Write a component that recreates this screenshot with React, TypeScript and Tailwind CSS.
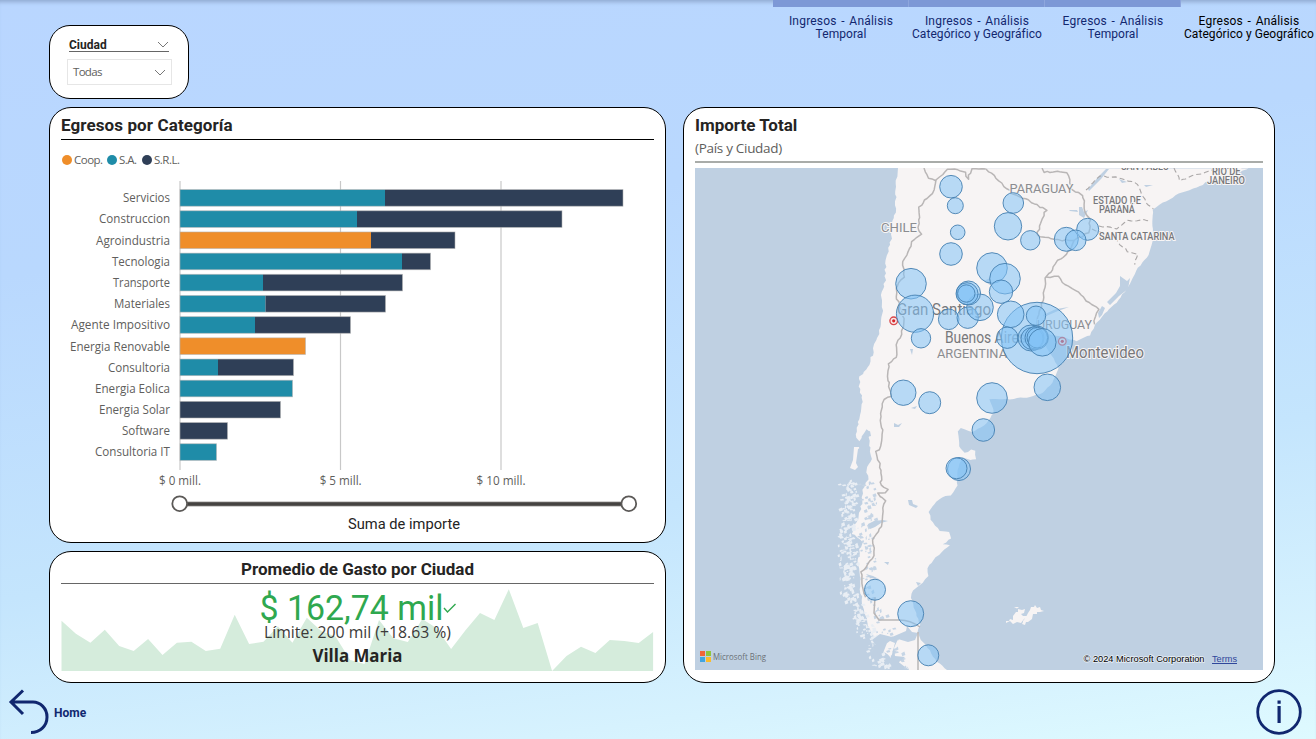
import React from "react";

type Pt = [number, number];

const TEAL = "#1f8ca8";
const NAVY = "#2f3f57";
const ORANGE = "#ef8e2a";

const tabs = [
  { first: "Ingresos - Análisis", second: "Temporal", active: false },
  { first: "Ingresos - Análisis", second: "Categórico y Geográfico", active: false },
  { first: "Egresos - Análisis", second: "Temporal", active: false },
  { first: "Egresos - Análisis", second: "Categórico y Geográfico", active: true },
];

const bars: { name: string; width: number; parts: [number, string][] }[] = [
  { name: "Servicios", width: 47, parts: [[385, TEAL], [623, NAVY]] },
  { name: "Construccion", width: 71, parts: [[357, TEAL], [562, NAVY]] },
  { name: "Agroindustria", width: 74, parts: [[371, ORANGE], [455, NAVY]] },
  { name: "Tecnologia", width: 58, parts: [[402, TEAL], [430.5, NAVY]] },
  { name: "Transporte", width: 57, parts: [[263, TEAL], [402.5, NAVY]] },
  { name: "Materiales", width: 56, parts: [[265.5, TEAL], [385.5, NAVY]] },
  { name: "Agente Impositivo", width: 99, parts: [[255, TEAL], [350.5, NAVY]] },
  { name: "Energia Renovable", width: 100, parts: [[305.5, ORANGE]] },
  { name: "Consultoria", width: 62, parts: [[218, TEAL], [293.5, NAVY]] },
  { name: "Energia Eolica", width: 75, parts: [[292.5, TEAL]] },
  { name: "Energia Solar", width: 71, parts: [[280.5, NAVY]] },
  { name: "Software", width: 48, parts: [[227.5, NAVY]] },
  { name: "Consultoria IT", width: 75, parts: [[216.5, TEAL]] },
];

const trend = [
  227, 266, 293, 254, 303, 318, 282, 330, 293, 290, 318, 311, 209, 297, 290, 244, 293, 218, 258, 275, 345, 357, 225, 280,
  291, 222, 250, 312, 256, 204, 225, 133, 249, 234, 378, 333, 305, 324, 285, 288, 294, 261,
];

const bubbles: [number, number, number][] = [
  [951, 186.7, 11.3], [955.3, 205.7, 8], [957.7, 232.3, 7.3], [951, 254, 11.3], [911, 283.7, 15.3], [915, 313.7, 18.6],
  [921, 338.3, 9.7], [948.7, 319.3, 10.3], [967.7, 317.7, 10.7], [903.3, 392.7, 12.7], [929.7, 402.7, 11],
  [980, 307.3, 13.3], [968.5, 293, 12], [967, 293.7, 11], [966.3, 293.5, 8.7], [1013.3, 203, 10.3],
  [1008, 226.3, 13.7], [1030.3, 240.3, 9.7], [1087.7, 229.3, 11], [1066.3, 239.3, 12], [1075.7, 240.3, 10.3],
  [992, 268, 15.3], [1005, 278.7, 15.3], [1001, 291.7, 11.7], [1037, 338, 35.7], [1010.7, 314.3, 13.3],
  [1036, 315.7, 9.7], [1007.3, 337.7, 10.7], [1031, 338, 13], [1032, 338.5, 11], [1036.7, 337.7, 11.7],
  [1037.3, 337.7, 10.3], [1042.3, 342.3, 13.8], [1047.3, 387.3, 13.3], [992, 398, 15.3], [983.3, 430, 11.3],
  [959, 469, 11.5], [956.5, 468.3, 10.5], [875, 589.7, 10.5], [910.7, 613.7, 13], [928.3, 655.3, 10.5],
];

const hash = (n: number) => {
  const v = Math.sin(n * 127.1 + 11.7) * 43758.5453;
  return v - Math.floor(v);
};

// Splits a polyline into short steps and shakes them to give a natural outline.
const rough = (pts: Pt[], amp: number) => {
  let d = `M${pts[0][0]} ${pts[0][1]}`;
  for (let i = 1; i < pts.length; i++) {
    const [ax, ay] = pts[i - 1];
    const [bx, by] = pts[i];
    const n = Math.max(1, Math.round(Math.hypot(bx - ax, by - ay) / 3.5));
    for (let k = 1; k <= n; k++) {
      const t = k / n;
      const s = i * 31 + k;
      d += `L${(ax + (bx - ax) * t + (hash(s) - 0.5) * amp).toFixed(1)} ${(ay + (by - ay) * t + (hash(s + 500) - 0.5) * amp).toFixed(1)}`;
    }
  }
  return d;
};

const west: Pt[] = [
  [898, 168], [896, 184], [896, 205], [893, 222], [890, 245], [886, 260], [885, 280], [882, 292], [882, 310], [881, 328],
  [876, 340], [872, 355], [867, 370], [860, 376], [859, 386], [862, 398], [861, 408], [858, 425], [856, 438], [859, 442],
  [866, 430], [870, 433], [869, 445], [872, 458], [866, 468], [868, 480], [862, 494], [861, 510], [856, 522], [852, 533],
  [862, 543], [858, 556], [859, 575], [860, 590], [864, 610], [868, 625], [875, 640], [884, 652], [897, 662], [914, 672],
];
const east: Pt[] = [
  [947, 670], [937, 662], [928, 648], [921, 640], [918, 632], [920, 625], [915, 610], [911, 598], [913, 590], [923, 583],
  [928, 576], [928, 568], [933, 560], [942, 552], [950, 545], [943, 544], [951, 538], [949, 532], [940, 531], [931, 520],
  [929, 512], [934, 504], [942, 497], [951, 495], [957, 486], [957, 474], [962, 457], [970, 460], [976, 459], [975, 451],
  [971, 450], [965, 453], [959, 446], [958, 432], [961, 428], [972, 432], [984, 426], [994, 413], [992, 406], [989, 399],
  [1010, 399], [1030, 397], [1043, 393], [1052, 383], [1058, 369], [1054, 358], [1047, 348], [1038, 336], [1037, 328],
  [1046, 333], [1062, 337], [1077, 341], [1090, 335], [1097, 322], [1107, 311], [1119, 300], [1130, 284], [1136, 271],
  [1149, 255], [1153, 239], [1152, 222], [1153, 209], [1166, 201], [1182, 192], [1197, 188], [1208, 181], [1222, 180], [1240, 172],
  [1249, 168],
];

const specks = (count: number, seed: number, kind: "land" | "water") => {
  let d = "";
  for (let i = 0; i < count; i++) {
    const y = 480 + hash(seed + i) * 188;
    const base = y < 590 ? 851 : 851 + (y - 590) * 0.45;
    const spread = kind === "land" ? -15 : 5;
    const x = base + spread + (hash(seed + i + 300) + hash(seed + i + 700)) * 11;
    const w = 0.8 + hash(seed + i + 900) * 2.8;
    const h = 0.8 + hash(seed + i + 1200) * 2.8;
    d += `M${x.toFixed(1)} ${y.toFixed(1)}l${w.toFixed(1)} ${(-h / 2).toFixed(1)}l${(w / 3).toFixed(1)} ${h.toFixed(1)}l${(-w).toFixed(1)} ${(h / 3).toFixed(1)}z`;
  }
  return d;
};

const borders: Pt[][] = [
  [[924, 168], [928, 179], [936, 180], [942, 174], [948, 170], [957, 170], [965, 172], [968, 179], [972, 169], [986, 169]],
  [[936, 180], [933, 194], [925, 200], [919, 207], [920, 217], [918, 228], [921, 234], [914, 239], [908, 252], [903, 262],
    [904, 277], [897, 285], [896, 296], [902, 311], [904, 323], [901, 334], [896, 344], [897, 357], [889, 364], [888, 380],
    [891, 396], [884, 400], [880, 414], [882, 430], [880, 449], [876, 451], [881, 470], [881, 486], [888, 489], [886, 493],
    [878, 494], [885, 500], [882, 515], [881, 526], [873, 540], [874, 555], [866, 568], [861, 571], [863, 590], [865, 597]],
  [[986, 169], [999, 181], [1013, 194], [1032, 202], [1046, 210], [1041, 223], [1037, 235], [1055, 240], [1073, 240], [1071, 250], [1058, 261], [1046, 277], [1043, 300], [1036, 325]],
  [[1042, 168], [1044, 172], [1067, 172], [1072, 190], [1083, 195], [1085, 212], [1090, 219], [1089, 233], [1073, 240]],
  [[1046, 277], [1058, 277], [1068, 287], [1079, 292], [1089, 303], [1099, 310], [1095, 316], [1094, 324]],
];
const stateLines: Pt[][] = [
  [[1086, 190], [1100, 176], [1119, 178], [1138, 184], [1142, 194], [1146, 203], [1154, 209]],
  [[1099, 226], [1117, 229], [1127, 221], [1151, 220]],
  [[1092, 229], [1115, 239], [1128, 252], [1138, 254], [1135, 264]],
  [[1174, 168], [1180, 181], [1195, 175], [1215, 170], [1233, 168]],
];

function Fit(props: {
  x: number; y: number; w: number; children: string; anchor?: "start" | "middle" | "end"; className?: string;
}) {
  return (
    <text
      x={props.x}
      y={props.y}
      textLength={props.w}
      lengthAdjust="spacingAndGlyphs"
      textAnchor={props.anchor ?? "start"}
      className={props.className}
    >
      {props.children}
    </text>
  );
}

function Chevron() {
  return (
    <svg width="12" height="7" viewBox="0 0 12 7" className="shrink-0">
      <path d="M1 1l5 5 5-5" fill="none" stroke="#777" strokeWidth="1" />
    </svg>
  );
}

function Legend() {
  const items = [
    { label: "Coop.", dot: "bg-[#ef8e2a]", box: "w-[45px]" },
    { label: "S.A.", dot: "bg-[#1f8ca8]", box: "w-[35px]" },
    { label: "S.R.L.", dot: "bg-[#2f3f57]", box: "w-[45px]" },
  ];
  return (
    <div className="mt-[12px] flex h-4 items-center pl-px font-['Open_Sans',sans-serif] text-[11.5px] tracking-[-0.5px] text-[#605e5c]">
      {items.map((it) => (
        <div key={it.label} className={`flex items-center gap-[2px] ${it.box}`}>
          <span className={`size-[10px] shrink-0 rounded-full ${it.dot}`} />
          {it.label}
        </div>
      ))}
    </div>
  );
}

function BarChart() {
  return (
    <svg width="593" height="368" viewBox="61 168 593 368" className="block font-['Open_Sans',sans-serif]">
      {[180, 340.5, 501].map((x) => (
        <path key={x} d={`M${x} 181V470`} stroke="#c8c8c8" strokeWidth="1.2" />
      ))}
      {bars.map((b, i) => {
        const y = 189.6 + i * 21.18;
        return (
          <g key={b.name}>
            <Fit x={170} y={y + 12.7} w={b.width} anchor="end" className="fill-[#605e5c] text-[12.5px]">{b.name}</Fit>
            {b.parts.map(([end, color], k) => {
              const start = k === 0 ? 180 : b.parts[k - 1][0];
              return <rect key={color} x={start} y={y} width={end - start} height="16.6" fill={color} />;
            })}
            <rect x="180" y={y} width={b.parts[b.parts.length - 1][0] - 180} height="16.6" fill="none" stroke="#b3b3b3" strokeOpacity=".7" strokeWidth=".8" />
          </g>
        );
      })}
      <g className="fill-[#605e5c] text-[12.5px]">
        <Fit x={180} y={485} w={42} anchor="middle">$ 0 mill.</Fit>
        <Fit x={340.7} y={485} w={42} anchor="middle">$ 5 mill.</Fit>
        <Fit x={501} y={485} w={49} anchor="middle">$ 10 mill.</Fit>
      </g>
      <path d="M180 504H629" stroke="#a6a4a2" strokeWidth="5" />
      <path d="M180 504H629" stroke="#454341" strokeWidth="3.4" />
      <circle cx="179.7" cy="503.7" r="7.4" fill="#fff" stroke="#5b5957" strokeWidth="1.8" />
      <circle cx="628.8" cy="503.7" r="7.4" fill="#fff" stroke="#5b5957" strokeWidth="1.8" />
      <Fit x={404} y={529} w={112} anchor="middle" className="fill-[#252423] font-[Roboto,sans-serif] text-[14px]">Suma de importe</Fit>
    </svg>
  );
}

function Kpi() {
  const line = trend.map((v, i) => `${(61.5 + i * 14.43).toFixed(1)} ${(545 + v / 3).toFixed(1)}`).join("L");
  return (
    <svg width="593" height="92" viewBox="61 584 593 92" className="block">
      <path d={`M${line}V671H61.5Z`} fill="#d5ecdc" />
      <Fit x={259.5} y={620} w={184} className="fill-[#2fa84f] font-[Roboto,sans-serif] text-[34.5px]">$ 162,74 mil</Fit>
      <path d="M444 608l3.5 4 8-8" fill="none" stroke="#2fa84f" strokeWidth="1.4" />
      <Fit x={264} y={638} w={187} className="fill-[#3b3a39] font-['Open_Sans',sans-serif] text-[15.5px]">Límite: 200 mil (+18.63 %)</Fit>
      <Fit x={312.5} y={662} w={90} className="fill-[#252423] font-['Open_Sans',sans-serif] text-[18px] font-bold">Villa Maria</Fit>
    </svg>
  );
}

function MapView() {
  const halo = "[paint-order:stroke] stroke-[#f7f5f5] [stroke-width:2px]";
  return (
    <svg width="568" height="502" viewBox="695 168 568 502" className="block font-[Roboto,sans-serif]">
      <rect x="695" y="168" width="568" height="502" fill="#bfd0e2" />
      <path d={`${rough(west, 2.2)}${rough(east, 1.1).replace("M", "L")}Z`} fill="#f7f4f4" />
      <path d="M854 447l5 0 1 6-2 8 1 5-4 4-5-2 3-8z" fill="#f7f4f4" />
      <path d={specks(330, 7, "land")} fill="#e9eef4" />
      <path d={specks(130, 90, "water")} fill="#c6d5e5" />
      <g fill="#bfd0e2">
        <path d="M872 640l8-6 12 3 14-6 1-5 5 6 6 1-3 7-7 2-10-3-4 9 1 8 10 1-6 5-2 10h-5l-1-14 4-15-5-2-7 5-5 12-8-4 6-9z" />
        <path d="M880 645l7-2-4 10-7 3zM891 655l8 6-2 9-7-6zM866 433l4-2 1 5-4 1zM858 449l8-4-1 14-6 10-3-6zM868 524l6-3 9-1 5 1-7 2-6 4-5 2zM866 574l7 2 6 3-9-1zM908 500l4 0 1 4 5 2-2 2-7-3zM894 423l4 2 4-2-3 4-5 0zM884 562l5 0-1 3zM916 582l5 1-3 3z" />
        <path d="M1120 276l7 5 3-3-2 11-9 7-9 9-3-3 9-9 4-7zM1102 306l3 2-3 7-3 3-1-5zM1069 210l8 0 1 2-8-1zM1079 207l3 0 2 5 4-2-4 8-5-3zM1119 179l8 3-5 1zM1144 185l9 0-7 2zM1088 189l11-13 7-7h3l-8 10-12 12zM1043 315l13-6 13-2-11 4-14 6zM910 349l3 0-1 6zM911 408l6-2-2 3zM984 281l6-3 0 7z" />
      </g>
      <g fill="#f7f4f4">
        <path d="M1006 621l3 0 1-2 3 1 0-4 3-4 2 0 0-3 4 1 3-1-1 4-3 1 2 2 5 0-4 3-3 4-4-1-4 2-3-3-4 2zM1023 621l3-4 2-4 2-3 1-3 3 0 1-2 2 3 3-1 1 3 3 1-4 1-3 0 0 2-4 0-1 5-4 3-2 0-1 3-3-1 1-2zM1014 607l5 0-2 1.500zM905 660l12 4 15 2 7 4h-30z" />
      </g>
      <g fill="none" stroke="#b9b6b6" strokeWidth="1.5" strokeLinejoin="round">
        {borders.map((b, i) => <path key={i} d={rough(b, 1.8)} />)}
        <path d="M875 597l-1 16 5 7h21q10 0 20 7M918 632v38" />
      </g>
      <g fill="none" stroke="#aaa7a7" strokeWidth="1.1" strokeDasharray="5 3">
        {stateLines.map((b, i) => <path key={i} d={rough(b, 1.5)} />)}
      </g>
      <g className={`fill-[#8b8c90] text-[12px] ${halo}`}>
        <Fit x={881} y={232} w={36}>CHILE</Fit>
        <Fit x={1009.5} y={193} w={64}>PARAGUAY</Fit>
        <Fit x={937} y={358} w={70}>ARGENTINA</Fit>
        <Fit x={1037} y={329} w={55}>URUGUAY</Fit>
      </g>
      <g className={`fill-[#77787b] text-[10.5px] font-medium ${halo}`}>
        <Fit x={1093} y={204} w={48}>ESTADO DE</Fit>
        <Fit x={1099} y={213} w={36}>PARANÁ</Fit>
        <Fit x={1099} y={240} w={75.5}>SANTA CATARINA</Fit>
        <Fit x={1212} y={175} w={28.5}>RIO DE</Fit>
        <Fit x={1207} y={184} w={38}>JANEIRO</Fit>
        <Fit x={1121} y={170} w={48}>SAN PABLO</Fit>
      </g>
      <g className={`fill-[#77787b] text-[16px] ${halo}`}>
        <Fit x={897} y={315} w={94}>Gran Santiago</Fit>
        <Fit x={945} y={343} w={81}>Buenos Aires</Fit>
        <Fit x={1066} y={358} w={78}>Montevideo</Fit>
      </g>
      {[[893.7, 320.8], [1062.3, 341.3]].map(([x, y]) => (
        <g key={x}>
          <circle cx={x} cy={y} r="3.8" fill="#f7e5e5" stroke="#d8464a" strokeWidth="1.3" />
          <circle cx={x} cy={y} r="1.6" fill="#d8262c" />
        </g>
      ))}
      {bubbles.map(([x, y, r]) => (
        <circle key={`${x}-${y}`} cx={x} cy={y} r={r} fill="#83c3f5" fillOpacity=".55" stroke="#4580b0" strokeOpacity=".9" strokeWidth="1" />
      ))}
      <rect x="700" y="651" width="5" height="5" fill="#f1653a" />
      <rect x="706" y="651" width="5" height="5" fill="#8dc63f" />
      <rect x="700" y="657" width="5" height="5" fill="#42a5e0" />
      <rect x="706" y="657" width="5" height="5" fill="#fbbc2c" />
      <Fit x={713} y={660} w={53} className="fill-[#6b7077] font-['Open_Sans',sans-serif] text-[8.5px]">Microsoft Bing</Fit>
      <Fit x={1083.5} y={662} w={121} className="fill-black stroke-[#e8eef5] font-['Liberation_Sans',sans-serif] text-[9.3px] [paint-order:stroke] [stroke-width:1.5px]">© 2024 Microsoft Corporation</Fit>
      <Fit x={1212} y={662} w={25} className="fill-[#2f479b] font-['Liberation_Sans',sans-serif] text-[9.3px]">Terms</Fit>
      <path d="M1212 663.5h25" stroke="#2f479b" strokeWidth="1" />
    </svg>
  );
}

export default function App() {
  return (
    <div className="flex h-[739px] w-[1316px] flex-col overflow-hidden bg-[linear-gradient(172deg,#b9d6ff_0%,#b9d8fe_30%,#c4e5fd_65%,#d6f2fe_88%,#defaff_100%)] font-[Roboto,sans-serif] shadow-[inset_0_5px_4px_-3px_#8fa9cf]">
      <header className="flex h-[107px] shrink-0 items-start justify-between pl-[49px]">
        <section className="mt-[25px] h-[74px] w-[140px] rounded-[21px] border border-black bg-white pl-[17px] pt-[11px]">
          <div className="ml-[2px] flex h-[15px] w-[100px] items-center justify-between border-b border-[#666] text-[12px] font-bold text-[#252423]">
            <span className="pt-[2px]">Ciudad</span>
            <Chevron />
          </div>
          <div className="mt-[7px] flex h-[26px] w-[105px] items-center justify-between border border-[#e6e6e6] pl-[5px] pr-[5px] font-['Open_Sans',sans-serif] text-[11.5px] tracking-[-0.7px] text-[#605e5c]">
            <span>Todas</span>
            <Chevron />
          </div>
        </section>
        <nav className="flex w-[543px]">
          {tabs.map((t, i) => (
            <div
              key={i}
              className={`flex w-[136px] shrink-0 flex-col items-center whitespace-nowrap text-center text-[12px] leading-[13px] ${t.active ? "text-black" : "text-[#12276f]"}`}
            >
              <span className={`mb-[7.5px] h-[7px] w-full ${t.active ? "" : "border-r border-[#8ea6dd] bg-[#7d98d6]"}`} />
              <span className="tracking-[0.2px] [word-spacing:1.4px]">{t.first}</span>
              <span className="tracking-[0.06px]">{t.second}</span>
            </div>
          ))}
        </nav>
      </header>

      <main className="flex shrink-0 gap-[17px] pl-[49px]">
        <div className="flex w-[617px] flex-col gap-[8px]">
          <section className="h-[436px] rounded-[22px] border border-black bg-white px-[11px] pt-[7px]">
            <h2 className="h-[25px] border-b border-black text-[17px] font-bold leading-[20px] tracking-[0.1px] text-[#252423]">Egresos por Categoría</h2>
            <Legend />
            <BarChart />
          </section>
          <section className="h-[132px] rounded-[22px] border border-black bg-white px-[11px] pt-[7px]">
            <h2 className="h-[25px] border-b border-[#666] text-center text-[17px] font-bold leading-[20px] text-[#252423]">Promedio de Gasto por Ciudad</h2>
            <Kpi />
          </section>
        </div>
        <section className="h-[576px] w-[592px] rounded-[22px] border border-black bg-white px-[11px] pt-[7px]">
          <h2 className="h-[22px] text-[17px] font-bold leading-[20px] text-[#252423]">Importe Total</h2>
          <div className="mb-[5px] h-[26px] border-b-2 border-[#a9aca9] font-['Open_Sans',sans-serif] text-[13.500px] leading-[22px] tracking-[-0.3px] text-[#605e5c]">(País y Ciudad)</div>
          <MapView />
        </section>
      </main>

      <footer className="flex min-h-0 flex-1 items-start justify-between pl-2 pr-[14px]">
        <div className="flex items-center gap-[5px] text-[12px] font-bold text-[#10276f]">
          <svg width="41" height="56" viewBox="8 683 41 56">
            <path d="M23 690.500L11 702l12 12M11 702h22c7 0 14 6 14 15s-7 15.500-16 15.500" fill="none" stroke="#10276f" strokeWidth="3" />
          </svg>
          <span className="pt-[4px]">Home</span>
        </div>
        <svg width="46" height="46" viewBox="0 0 46 46" className="mt-[6px]">
          <circle cx="23" cy="23" r="21.300" fill="none" stroke="#10276f" strokeWidth="2.800" />
          <path d="M21.500 17h3.200v17h-3.200zM21.500 11.500h3.200v3.300h-3.200z" fill="#10276f" />
        </svg>
      </footer>
    </div>
  );
}
